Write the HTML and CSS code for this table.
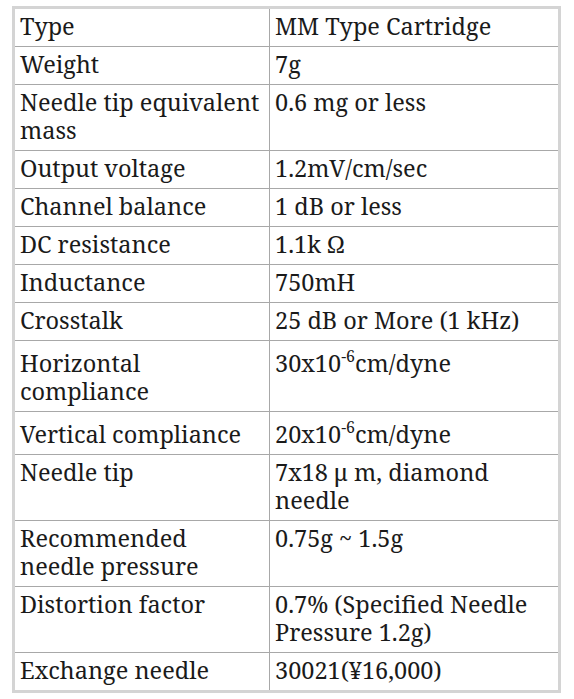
FILE: index.html
```
<!DOCTYPE html>
<html lang="en">
	<head>
		<title>Specifications</title>
		<link rel="stylesheet" href="styles.css">
	</head>
<body>
<table class="spec">
	<tr><td>Type</td><td>MM Type Cartridge</td></tr>
	<tr><td>Weight</td><td>7g</td></tr>
	<tr><td>Needle tip equivalent mass</td><td>0.6 mg or less</td></tr>
	<tr><td>Output voltage</td><td>1.2mV/cm/sec</td></tr>
	<tr><td>Channel balance</td><td>1 dB or less</td></tr>
	<tr><td>DC resistance</td><td>1.1k &Omega;</td></tr>
	<tr><td>Inductance</td><td>750mH</td></tr>
	<tr><td>Crosstalk</td><td>25 dB or More (1 kHz)</td></tr>
	<tr><td>Horizontal compliance</td><td>30x10<sup>-6</sup>cm/dyne</td></tr>
	<tr><td>Vertical compliance</td><td>20x10<sup>-6</sup>cm/dyne</td></tr>
	<tr><td>Needle tip</td><td>7x18 &mu; m, diamond needle</td></tr>
	<tr><td>Recommended needle pressure</td><td>0.75g ~ 1.5g</td></tr>
	<tr><td>Distortion factor</td><td>0.7% (Specified Needle Pressure 1.2g)</td></tr>
	<tr><td>Exchange needle</td><td>30021(&yen;16,000)</td></tr>
</table>
</body>
</html>
```
FILE: styles.css
```
body {
    margin: 6px 13px 0 12px;
    background: #fff;
    font-family: "Noto Serif", "DejaVu Serif", serif;
    color: #1a1a1a;
}
.spec {
    width: 549px;
    border-collapse: collapse;
    border: solid 3px #d4d4d4;
    font-size: 23.5px;
    line-height: 28px;
}
.spec td {
    border: solid 1px #a8a8a8;
    padding: 3px 5px 6px;
    vertical-align: baseline;
    text-align: left;
}
.spec td:first-child {
    width: 244px;
}
/* exponent grows the first line a little, like the original */
.spec sup {
    font-size: 16px;
    line-height: 24px;
    vertical-align: 10px;
}
```
